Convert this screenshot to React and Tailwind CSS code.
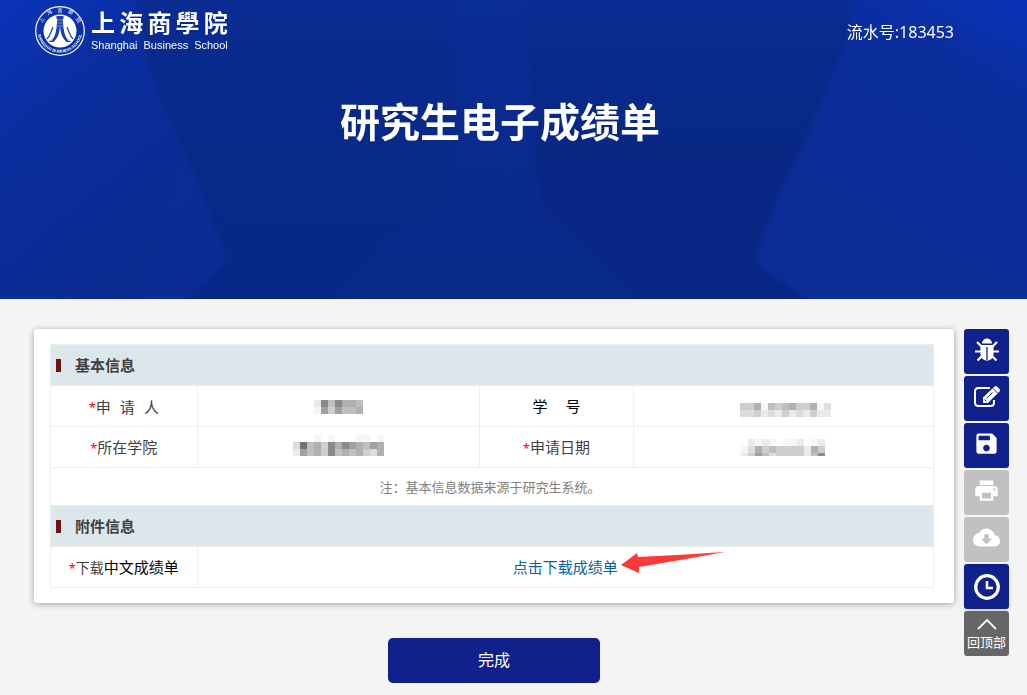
import { MdCloudDownload, MdPrint, MdSave } from 'react-icons/md';

const CELL = 'border border-[#eeeeee] text-center';
const HEADING = 'border border-[#eeeeee] bg-[#dce7ec] pl-[5px]';

function HeaderBackground() {
  return (
    <svg
      className="col-start-1 row-start-1 h-full w-full"
      viewBox="0 0 1027 298"
      preserveAspectRatio="none"
      aria-hidden="true"
    >
      <defs>
        <linearGradient id="base" x1="0" y1="0" x2="0" y2="1">
          <stop offset="0" stopColor="#0a2c92" />
          <stop offset="0.5" stopColor="#082884" />
          <stop offset="1" stopColor="#082785" />
        </linearGradient>
        <linearGradient id="left" x1="0" y1="0" x2="0.6" y2="1">
          <stop offset="0" stopColor="#0a34bc" />
          <stop offset="0.4" stopColor="#0a2e9e" />
          <stop offset="1" stopColor="#0b2b8e" />
        </linearGradient>
        <linearGradient id="right" x1="1" y1="0" x2="0.5" y2="1">
          <stop offset="0" stopColor="#0a34bc" />
          <stop offset="0.3" stopColor="#0a2e9c" />
          <stop offset="1" stopColor="#0b2d94" />
        </linearGradient>
        <linearGradient id="middle" x1="0" y1="0" x2="0" y2="1">
          <stop offset="0" stopColor="#0b2f9a" />
          <stop offset="1" stopColor="#0a2b8b" />
        </linearGradient>
        <filter id="soft" colorInterpolationFilters="sRGB">
          <feGaussianBlur stdDeviation="2" />
        </filter>
      </defs>
      <rect width="1027" height="298" fill="url(#base)" />
      <g filter="url(#soft)">
        <path d="M120 -10H457L450 190L385 240L325 308H175L225 262L145 60Z" fill="#0a2b8e" opacity="0.4" />
        <path d="M-10 -10H135Q140 50 165 110Q205 190 225 255Q226 264 215 270L175 308H-10Z" fill="url(#left)" />
        <path d="M183 165L225 255Q226 264 215 270L175 308H140Z" fill="#0c309a" opacity="0.4" />
        <path d="M457 -10H525L540 195Q545 212 570 230L650 308H325L385 240Q430 210 450 190Z" fill="url(#middle)" opacity="0.6" />
        <path d="M855 -10L845 45L805 140Q770 210 757 250Q754 262 768 272L820 308H1040V-10Z" fill="url(#right)" />
        <path d="M840 -10H1040V50Q950 30 885 38Q850 30 840 -10Z" fill="#0a34b8" opacity="0.2" />
      </g>
    </svg>
  );
}

function Emblem() {
  return (
    <svg width="52" height="52" viewBox="0 0 52 52" role="img" aria-label="校徽">
      <defs>
        <path id="ringTop" d="M6.5 26a19.5 19.5 0 0 1 39 0" />
        <path id="ringBottom" d="M3.6 23a22.5 22.5 0 1 0 44.8 0" />
      </defs>
      <circle cx="26" cy="26" r="24.3" fill="none" stroke="#fff" strokeWidth="1.2" />
      <circle cx="26" cy="26" r="16.5" fill="#fff" />
      <text fill="#fff" fontSize="5" fontFamily='"Noto Sans CJK TC", sans-serif'>
        <textPath href="#ringTop" startOffset="50%" textAnchor="middle">上　海　商　學　院</textPath>
      </text>
      <text fill="#fff" fontSize="4" fontWeight="bold" fontFamily='"Liberation Sans", sans-serif'>
        <textPath href="#ringBottom" startOffset="50%" textAnchor="middle">SHANGHAI BUSINESS SCHOOL</textPath>
      </text>
      <path d="M22.500 11h7v3h-1l1 8c1 8 3 12 8 15h-5c-4-4-6-8-6.500-16c-.5 8-2.500 12-6.500 16h-5c5-3 7-7 8-15l1-8h-1z" fill="#1a40ab" />
      <path d="M24 15h4M23.600 18h4.800M23.300 21h5.400" stroke="#8ea4dc" strokeWidth="0.800" />
      <path d="M22 22c-1 7-2 10-5 14M30 22c1 7 2 10 5 14" fill="none" stroke="#fff" strokeWidth="0.900" />
      <path d="M19 22l-2 5q-2 5-4 7M33 22l2 5q2 5 4 7" fill="none" stroke="#1a40ab" strokeWidth="1.200" />
    </svg>
  );
}

function Logo() {
  return (
    <div className="flex items-center gap-[5px] text-white">
      <Emblem />
      <div className="flex flex-col pb-1">
        <div className="flex justify-between font-['Noto_Sans_CJK_TC',sans-serif] text-[24px] leading-[32px] font-bold">
          <span>上</span>
          <span>海</span>
          <span>商</span>
          <span>學</span>
          <span>院</span>
        </div>
        <div className="flex gap-[6px] font-['Liberation_Sans',sans-serif] text-[11px] leading-[14px]">
          <span>Shanghai</span>
          <span>Business</span>
          <span>School</span>
        </div>
      </div>
    </div>
  );
}

// each string is one row of pixels, 0 = white, 9 = darkest
const SHADES = ['#ffffff', '#f6f6f6', '#eaeaea', '#dcdcdc', '#cecece', '#bfbfbf', '#b0b0b0', '#a0a0a0', '#8a8a8a', '#727272'];

function Mosaic({ rows, heights, label }) {
  const width = rows[0].length * 7;
  const tops = heights.map((_, i) => heights.slice(0, i).reduce((a, b) => a + b, 0));
  const height = heights.reduce((a, b) => a + b, 0);
  return (
    <svg className="mx-auto block" width={width} height={height} role="img" aria-label={label}>
      {rows.map((row, r) =>
        row.split('').map((shade, c) => (
          <rect key={`${r}-${c}`} x={c * 7} y={tops[r]} width="7" height={heights[r]} fill={SHADES[shade]} />
        ))
      )}
    </svg>
  );
}

function SectionRow({ title }) {
  return (
    <tr className="h-[41px]">
      <th colSpan={4} className={HEADING}>
        <span className="flex items-center gap-[14px] text-[15px] leading-5 font-bold text-[#404040]">
          <span className="h-[13px] w-[5px] bg-[#6b1410]"></span>
          {title}
        </span>
      </th>
    </tr>
  );
}

function Star() {
  return <span className="text-[13px] text-[#ff0000]">*</span>;
}

function BugIcon() {
  return (
    <svg width="24" height="24" viewBox="0 0 24 24" fill="none" stroke="#fff" strokeWidth="2.2">
      <path d="M7 5.500a5 5 0 0 1 10 0z" fill="#fff" stroke="none" />
      <path d="M5.500 7h13v9q0 5-5 6.500h-3q-5-1.500-5-6.500z" fill="#fff" stroke="none" />
      <path d="M2 4l5 5M22 4l-5 5M0 13.500H7M24 13.500H17M2.500 22.500l5-5M21.500 22.500l-5-5" />
      <path d="M12 9v13" stroke="#10218b" strokeWidth="1.300" />
    </svg>
  );
}

function EditIcon() {
  return (
    <svg width="28" height="24" viewBox="0 0 28 24" fill="none" stroke="#fff" strokeWidth="2">
      <path d="M17 3H5.500Q2 3 2 6.500v11Q2 21 5.500 21h12q3.500 0 3.500-3.500V15" />
      <path d="M10 12.500L21.500 1.500q1.500-1 2.500 0l2.500 2.500q1 1 0 2.500L15 18h-5z" fill="#fff" stroke="none" />
      <path d="M20 3.500l4.500 4.500M13.500 13.500l6-6M11.500 14.500l2 2" stroke="#10218b" strokeWidth="1" />
    </svg>
  );
}

function ClockIcon() {
  return (
    <svg width="28" height="28" viewBox="0 0 28 28" fill="none" stroke="#fff">
      <circle cx="14" cy="14" r="11.300" strokeWidth="3.200" />
      <path d="M14 8v7h6" strokeWidth="2.500" />
    </svg>
  );
}

const TOOLS = [
  { label: '反馈', icon: <BugIcon />, color: 'bg-[#10218b] pb-1' },
  { label: '编辑', icon: <EditIcon />, color: 'bg-[#10218b] pb-1' },
  { label: '保存', icon: <MdSave size={27} />, color: 'bg-[#10218b] pb-1' },
  { label: '打印', icon: <MdPrint size={27} />, color: 'bg-[#c1c1c1] pb-1', disabled: true },
  { label: '下载', icon: <MdCloudDownload size={27} />, color: 'bg-[#c1c1c1] pb-1', disabled: true },
  { label: '历史', icon: <ClockIcon />, color: 'bg-[#10218b] shadow-md' },
];

function Toolbar() {
  return (
    <aside className="flex w-[45px] shrink-0 flex-col gap-[2px] text-white">
      {TOOLS.map((tool) => (
        <button
          key={tool.label}
          type="button"
          aria-label={tool.label}
          disabled={tool.disabled}
          className={`flex h-[45px] items-center justify-center rounded-[3px] ${tool.color}`}
        >
          {tool.icon}
        </button>
      ))}
      <button
        type="button"
        className="flex h-[45px] flex-col items-center justify-center gap-1 rounded-[3px] bg-[#666666] text-[13px] leading-4"
      >
        <svg width="20" height="12" viewBox="0 0 20 12" fill="none" stroke="#fff" strokeWidth="1.800">
          <path d="M1 11l9-9l9 9" />
        </svg>
        回顶部
      </button>
    </aside>
  );
}

function InfoTable() {
  return (
    <table className="w-full table-fixed border-collapse text-[15px] leading-5 text-[#404040]">
      <colgroup>
        <col className="w-[16.6%]" />
        <col className="w-[32%]" />
        <col className="w-[17.4%]" />
        <col className="w-[34%]" />
      </colgroup>
      <tbody>
        <SectionRow title="基本信息" />
        <tr className="h-[41px]">
          <td className={CELL}>
            <span className="inline-flex">
              <Star />
              <span className="flex gap-[9px]">
                <span>申</span>
                <span>请</span>
                <span>人</span>
              </span>
            </span>
          </td>
          <td className={`${CELL} pt-[2px]`}>
            <Mosaic label="申请人" rows={['2858665', '1747556']} heights={[7, 7]} />
          </td>
          <td className={`${CELL} text-black`}>
            <span className="inline-flex gap-[18px]">
              <span>学</span>
              <span>号</span>
            </span>
          </td>
          <td className={`${CELL} pt-[7px] pl-1`}>
            <Mosaic label="学号" rows={['4461545644613', '3342324232422']} heights={[7, 7]} />
          </td>
        </tr>
        <tr className="h-[41px]">
          <td className={CELL}>
            <Star />
            所在学院
          </td>
          <td className={`${CELL} pb-1`}>
            <Mosaic label="所在学院" rows={['0001010001101', '3956486876576', '2756485656436']} heights={[7, 7, 7]} />
          </td>
          <td className={CELL}>
            <Star />
            申请日期
          </td>
          <td className={CELL}>
            <Mosaic label="申请日期" rows={['021210112012', '136454444264', '247534444258']} heights={[7, 7, 3]} />
          </td>
        </tr>
        <tr className="h-[38px]">
          <td colSpan={4} className={`${CELL} pr-1 text-[13px] text-[#808080]`}>
            注：基本信息数据来源于研究生系统。
          </td>
        </tr>
        <SectionRow title="附件信息" />
        <tr className="h-[41px]">
          <td className={CELL}>
            <Star />
            <span className="text-[14px]">下载</span>
            <span className="text-black">中文成绩单</span>
          </td>
          <td colSpan={3} className={CELL}>
            <a href="#download" className="relative inline-block text-[#0660a5]">
              点击下载成绩单
              <svg
                className="absolute top-[-6px] left-full ml-[3px]"
                width="105"
                height="24"
                viewBox="0 0 105 24"
                aria-hidden="true"
              >
                <path d="M0 14L16 2l1 4Q60 4 104 1Q60 9 18 16l0 6z" fill="#fd3a37" />
              </svg>
            </a>
          </td>
        </tr>
      </tbody>
    </table>
  );
}

export default function App() {
  return (
    <div className="min-h-screen bg-[#f4f4f4] font-['Noto_Sans','Noto_Sans_CJK_SC',sans-serif]">
      <header className="grid bg-[#082a89] text-white">
        <HeaderBackground />
        <div className="z-10 col-start-1 row-start-1 min-h-[299px] pt-[5px] pr-[73px] pl-[34px]">
          <div className="flex items-center justify-between">
            <Logo />
            <p className="pt-[2px] text-[16px] leading-6">流水号:183453</p>
          </div>
          <h1 className="mt-[37px] pl-3 text-center text-[40px] leading-[56px] font-bold">研究生电子成绩单</h1>
        </div>
      </header>
      <div className="flex gap-[10px] pt-[30px] pr-[18px] pl-[34px]">
        <main className="min-w-0 flex-1">
          <section className="rounded-[3px] bg-white py-[15px] pr-5 pl-4 shadow-[0_1px_6px_rgba(0,0,0,0.35)]">
            <InfoTable />
          </section>
          <div className="mt-[35px] flex justify-center pb-3">
            <button type="button" className="h-[45px] w-[212px] rounded-[5px] bg-[#10218b] pb-[2px] text-[16px] text-white">
              完成
            </button>
          </div>
        </main>
        <Toolbar />
      </div>
    </div>
  );
}
